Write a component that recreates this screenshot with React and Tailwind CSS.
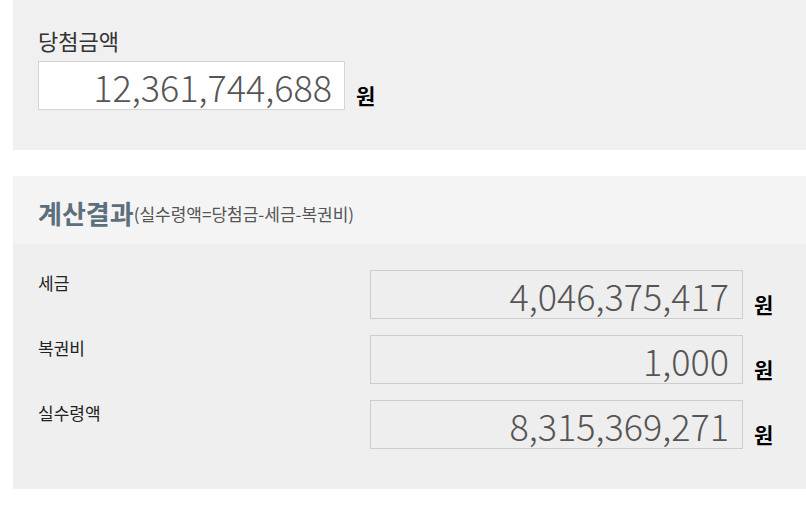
import React from 'react';

const font = { fontFamily: '"Noto Sans CJK KR", "Noto Sans", sans-serif' };

const rows = [
  { label: '세금', value: '4,046,375,417' },
  { label: '복권비', value: '1,000' },
  { label: '실수령액', value: '8,315,369,271' },
];

const Won = () => (
  <span className="mb-[4px] ml-[11px] text-[21px] font-bold leading-none text-black">원</span>
);

export default function App() {
  return (
    <div className="w-[806px] h-[510px] overflow-hidden bg-white pl-[13px]" style={font}>
      {/* 당첨금액 입력 */}
      <section className="h-[150px] bg-[#f0f0f0] pl-[25px] pt-[25px]">
        <div className="text-[22px] leading-[30px] text-[#333]">당첨금액</div>
        <div className="mt-[6px] flex items-end">
          <div className="flex h-[49px] w-[307px] items-center justify-end border border-[#d4d4d4] bg-white pr-[12px] text-[36px] font-extralight leading-none text-[#555]">
            12,361,744,688
          </div>
          <Won />
        </div>
      </section>

      {/* 계산결과 */}
      <section className="mt-[26px] w-[820px]">
        <div className="flex h-[68px] items-center bg-[#f4f4f4] pl-[25px] pt-[4px]">
          <span className="text-[26px] font-bold text-[#5b6f7d]">계산결과</span>
          <span className="mt-[3px] text-[17px] text-[#555]">(실수령액=당첨금-세금-복권비)</span>
        </div>
        <div className="flex h-[245px] flex-col gap-[16px] bg-[#efefef] pl-[25px] pt-[26px]">
          {rows.map((r) => (
            <div key={r.label} className="flex items-end">
              <div className="h-[49px] w-[332px] self-start pt-[1px] text-[17px] leading-[24px] text-[#222]">
                {r.label}
              </div>
              <div className="flex h-[49px] w-[373px] items-center justify-end border border-[#cdcdcd] bg-[#eeeeee] pr-[13px] text-[36px] font-extralight leading-none text-[#555]">
                {r.value}
              </div>
              <Won />
            </div>
          ))}
        </div>
      </section>
    </div>
  );
}
